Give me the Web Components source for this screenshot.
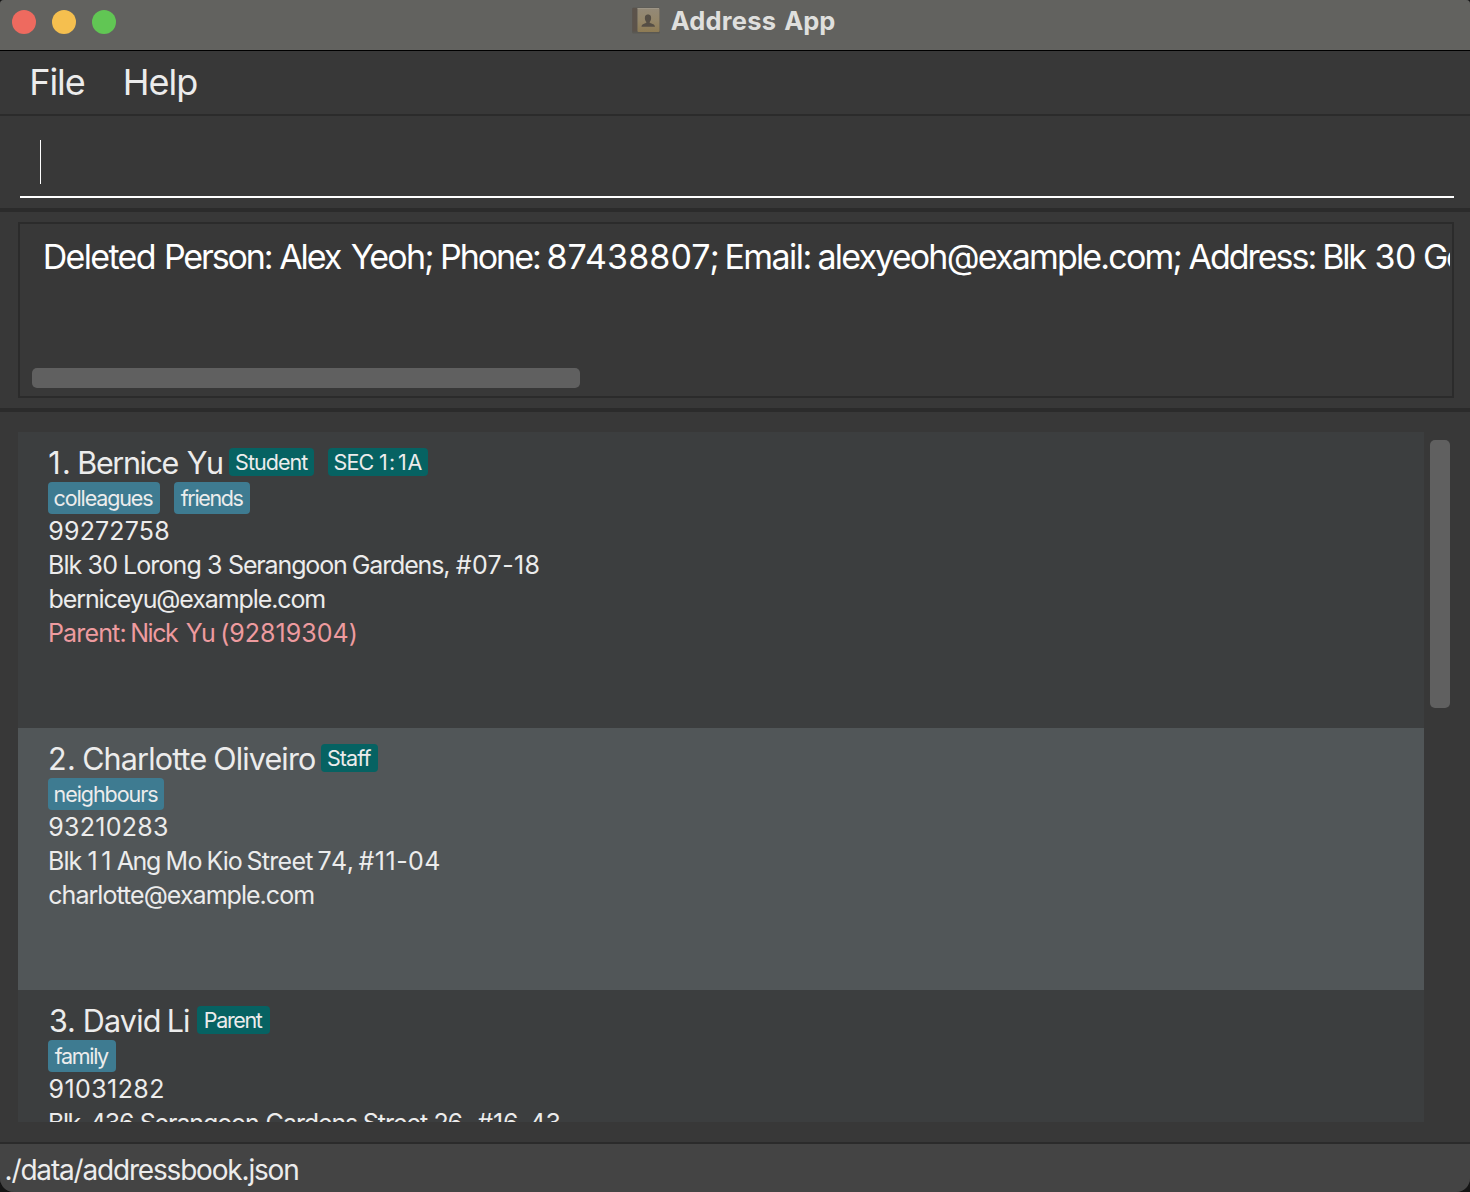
<!DOCTYPE html>
<html lang="en">
<head>
<meta charset="utf-8">
<title>Address App</title>
<style>
html,body{margin:0;height:100%;background:#151515;overflow:hidden}
body{font-family:Inter,"Liberation Sans",sans-serif;color:#ececec}
</style>
</head>
<body>
<address-app></address-app>
<script>
const pen = document.createElement('canvas').getContext('2d');
const define = (name, html, setup) => customElements.define(name, class extends HTMLElement {
  connectedCallback() {
    if (this.shadowRoot) return;
    const t = document.createElement('template');
    t.innerHTML = html;
    this.attachShadow({ mode: 'open' }).append(t.content.cloneNode(true));
    if (setup) setup(this, this.shadowRoot);
  }
});

// One line of text. "at" lists, word by word, where the ink starts and ends
// (start-end, in pixels from the element's left edge); tracking and gaps follow from it.
define('ui-text', `<style>:host{display:block;white-space:nowrap;flex:none}p{display:flex;margin:0;white-space:pre}span{flex:none;display:block}</style><p></p>`, (el, root) => {
  const size = +el.getAttribute('size'), weight = el.getAttribute('weight') || 400;
  const words = el.getAttribute('text').split(' ');
  const at = el.getAttribute('at').split(' ').map(s => s.split('-').map(Number));
  const p = root.querySelector('p');
  pen.font = `${weight} ${size}px Inter`;
  p.style.fontSize = size + 'px';
  p.style.fontWeight = weight;
  const boxes = words.map((word, i) => {
    const m = pen.measureText(word);
    const ink = m.actualBoundingBoxLeft + m.actualBoundingBoxRight;
    const track = word.length > 1 ? (at[i][1] - at[i][0] - ink) / (word.length - 1) : 0;
    return { x: at[i][0] + m.actualBoundingBoxLeft, track };
  });
  p.style.paddingLeft = Math.max(0, boxes[0].x).toFixed(2) + 'px';
  words.forEach((word, i) => {
    const s = document.createElement('span');
    const last = i === words.length - 1;
    s.textContent = last ? word : word + ' ';
    s.style.letterSpacing = boxes[i].track.toFixed(3) + 'px';
    if (!last) s.style.width = (boxes[i + 1].x - boxes[i].x).toFixed(2) + 'px';
    p.append(s);
  });
});

define('title-bar', `<style>
:host{display:flex;box-sizing:border-box;height:51px;flex:none;background:#62625f;border-bottom:1px solid #000;padding:10px 0 0 12px}
.dots{display:flex;gap:16px;width:620px;flex:none}
i{width:24px;height:24px;border-radius:50%}
.name{display:flex;margin-top:-4px;gap:10px;color:#dfdfdd;line-height:30px}
svg{display:block}
</style>
<div class="dots"><i style="background:#ee6a5f"></i><i style="background:#f5bf4f"></i><i style="background:#61c654"></i></div>
<div class="name"><svg width="28" height="28" viewBox="0 0 28 28">
<defs><linearGradient id="g" x1="0" y1="0" x2="0" y2="1"><stop stop-color="#938978"/><stop offset=".5" stop-color="#94866a"/><stop offset="1" stop-color="#8e7b54"/></linearGradient></defs>
<rect y="1.500" width="28" height="26" rx="1.500" fill="#5a5852"/><rect x=".5" y="2" width="4.500" height="23.500" rx="1" fill="#5c534b"/>
<rect x="5.500" y="2" width="22" height="24" rx="1" fill="url(#g)"/><path d="M5.500 2.500H27" stroke="#9d9586"/>
<path d="M9 20.500c0-3.200 4.300-2.800 5-4.500-1.500-1.600-2-3.500-1.400-6 .7-2.400 5.100-2.400 5.800 0 .6 2.500.1 4.400-1.400 6 .7 1.700 5.500 1.300 5.500 4.500z" fill="#554e45" transform="translate(.5 .3)"/></svg>
<ui-text text="Address App" size="25.5" at=".7-105.7 114.3-165.3" weight="700"></ui-text></div>`);

define('menu-bar', `<style>
:host{display:flex;box-sizing:border-box;height:65px;flex:none;border-bottom:2px solid #2b2b2b;padding:9px 0 0 28px;line-height:44px}
ui-text:first-of-type{width:93px}
</style><ui-text text="File" size="36" at="4.3-56.7"></ui-text><ui-text text="Help" size="36" at="4.7-76.3"></ui-text>`);

define('command-box', `<style>
:host{display:flex;flex:none;box-sizing:border-box;height:96px;border-bottom:4px solid #2b2b2b;padding:24px 16px 10px 20px}
div{flex:1;border-bottom:2px solid #fff;padding-left:20px}
i{display:block;width:1px;height:44px;background:#fff}
</style><div><i></i></div>`);

define('result-display', `<style>
:host{display:block;flex:none;box-sizing:border-box;height:200px;border-bottom:4px solid #2b2b2b;padding:10px 16px 10px 18px}
.box{box-sizing:border-box;height:176px;border:2px solid #2b2b2b;padding:12px 2px 8px 12px;display:flex;flex-direction:column;justify-content:space-between}
.line{overflow:hidden;color:#fff;line-height:42px;height:46px}
.bar{width:548px;height:20px;border-radius:5px;background:#606060}
</style><div class="box"><div class="line"><ui-text size="34" text="Deleted Person: Alex Yeoh; Phone: 87438807; Email: alexyeoh@example.com; Address: Blk 30 Geylang"
at="12.7-122.7 134-239.7 247.3-309.7 318.7-400.3 410-508 516.5-685.5 694.5-778.5 786.5-1148.5 1156.5-1283.5 1292.3-1335.3 1344.5-1383 1393-1507"></ui-text></div><div class="bar"></div></div>`);

define('ui-badge', `<style>
:host{display:block;box-sizing:border-box;flex:none;height:28px;line-height:28px;border-radius:4px;background:#066262;margin-right:14px}
:host([tag]){height:32px;line-height:32px;background:#3e7b91}
</style><div></div>`, (el, root) => {
  el.style.width = el.getAttribute('box') + 'px';
  root.querySelector('div').innerHTML = `<ui-text text="${el.getAttribute('text')}" size="21.5" at="${el.getAttribute('at')}"></ui-text>`;
});

define('person-card', `<style>
:host{display:block;box-sizing:border-box;flex:none;padding:16px 0 0 30px;background:#3c3e3f}
:host([alt]){background:#515658}
.name,.tags{display:flex;height:34px;line-height:30px}
.tags{height:32px}
.lines{line-height:34px}
.lines ui-text{height:34px}
.parent{color:#ee9b9f}
</style><div class="name"></div><div class="tags"></div><div class="lines"></div>`, (el, root) => {
  const p = el.person;
  el.style.height = p.height + 'px';
  const badge = (kind) => ([t, at, b]) => `<ui-badge ${kind} text="${t}" at="${at}" box="${b}"></ui-badge>`;
  root.querySelector('.name').innerHTML = `<ui-text text="${p.name[0]}" size="30.5" at="${p.name[1]}" style="width:${p.name[2]}px"></ui-text>` + p.roles.map(badge('')).join('');
  root.querySelector('.tags').innerHTML = p.tags.map(badge('tag')).join('');
  root.querySelector('.lines').innerHTML = p.lines.map(([t, at]) => `<ui-text ${t.startsWith('Parent') ? 'class="parent"' : ''} text="${t}" size="25" at="${at}"></ui-text>`).join('');
});

const people = [
  { height: 296, name: ['1. Bernice Yu', '1.3-20.9 31.3-130.6 138.8-174.1', 181],
    roles: [['Student', '7.1-79.2', 85], ['SEC 1: 1A', '6.6-45.6 52-65.9 70.9-94.5', 100]],
    tags: [['colleagues', '6.6-105.2', 112], ['friends', '6.7-69.6', 76]],
    lines: [['99272758', '1.3-120.2'],
      ['Blk 30 Lorong 3 Serangoon Gardens, #07-18', '1.6-34.1 40.2-68.8 76.6-152 159.5-173.1 180.6-297.7 304.5-400.9 407.4-490.2'],
      ['berniceyu@example.com', '1.6-276.3'],
      ['Parent: Nick Yu (92819304)', '1.6-77 83.8-130.6 137.4-165.6 173.8-307.4']] },
  { height: 262, name: ['2. Charlotte Oliveiro', '1.3-25.2 34.5-157.7 165.6-266.3', 273],
    roles: [['Staff', '6.9-50.4', 57]], tags: [['neighbours', '6.6-110.2', 116]],
    lines: [['93210283', '1.3-119.1'],
      ['Blk 11 Ang Mo Kio Street 74, #11-04', '1.6-34.1 40.2-60.9 68.4-111.6 119.1-153.1 160.2-193.4 199.1-264.9 270.2-304.5 310.2-391'],
      ['charlotte@example.com', '1.3-265.2']] },
  { height: 262, name: ['3. David Li', '1.9-26 36.7-111.8 120.7-141', 149],
    roles: [['Parent', '7.8-65.8', 73]], tags: [['family', '6.8-61.1', 68]],
    lines: [['91031282', '1.6-115.2'],
      ['Blk 436 Serangoon Gardens Street 26, #16-43', '1.9-33.4 43-84.8 92.6-209.9 218.4-309 315.7-380 386.3-419 429.2-511.4']] }
];

define('person-list', `<style>
:host{display:flex;flex:none;box-sizing:border-box;height:730px;padding:20px 20px 20px 18px;gap:6px}
.list{flex:1;display:flex;flex-direction:column;overflow:hidden}
.bar{width:20px;height:268px;margin-top:8px;border-radius:5px;background:#606060}
</style><div class="list"></div><div class="bar"></div>`, (el, root) => {
  people.forEach((p, i) => {
    const card = document.createElement('person-card');
    card.person = p;
    card.toggleAttribute('alt', i % 2 === 1);
    root.querySelector('.list').append(card);
  });
});

define('status-bar', `<style>
:host{display:block;flex:1;box-sizing:border-box;border-top:2px solid #2b2b2b;background:#444;padding:9px 0 0 4px;line-height:34px}
</style><ui-text text="./data/addressbook.json" size="28" at="2.6-294.2"></ui-text>`);

define('address-app', `<style>
:host{display:flex;flex-direction:column;box-sizing:border-box;height:1192px;width:1470px;background:#383838;overflow:hidden;border-radius:4px 4px 14px 14px}
</style><title-bar></title-bar><menu-bar></menu-bar><command-box></command-box><result-display></result-display><person-list></person-list><status-bar></status-bar>`);
</script>
</body>
</html>
